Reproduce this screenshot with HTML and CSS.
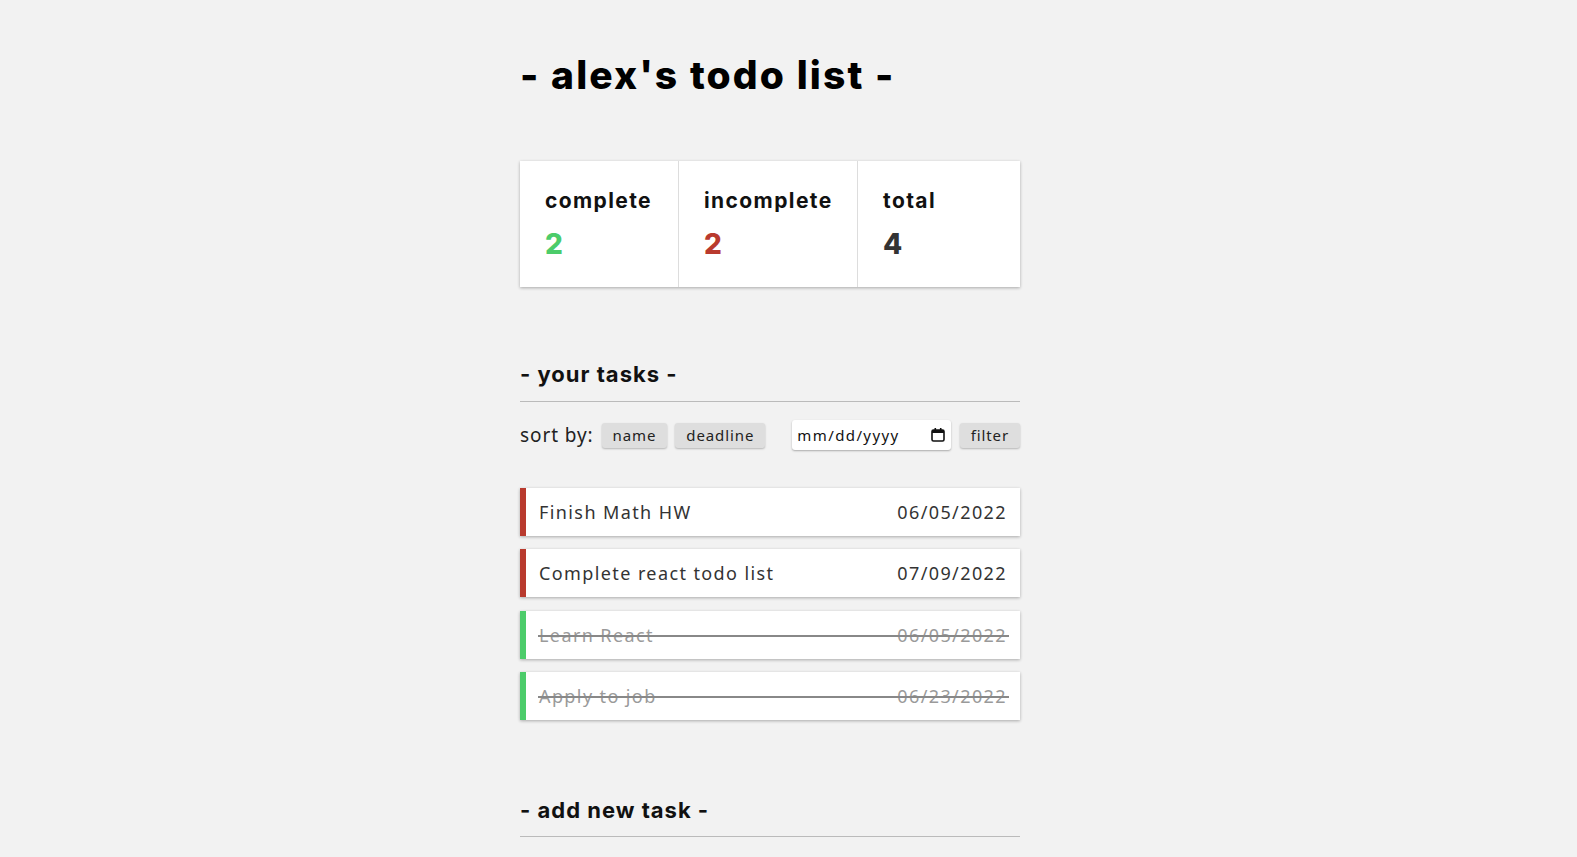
FILE: index.html
```html
<!DOCTYPE html>
<html>
<head>
<meta charset="utf-8">
<link rel="stylesheet" href="styles.css">
</head>
<body>
<div class="page">
  <h1 class="title">- alex's todo list -</h1>
  <div class="stats">
    <div class="stat s1"><div class="label">complete</div><div class="num green">2</div></div>
    <div class="stat s2"><div class="label">incomplete</div><div class="num red">2</div></div>
    <div class="stat s3"><div class="label">total</div><div class="num dark">4</div></div>
  </div>
  <h2 class="section">- your tasks -</h2>
  <hr class="rule">
  <div class="controls">
    <span class="sortlabel">sort by:</span>
    <button class="btn">name</button>
    <button class="btn">deadline</button>
    <div class="date"><span>mm/dd/yyyy</span>
      <svg width="16" height="16" viewBox="0 0 16 16"><rect x="2" y="3" width="12" height="11" rx="1.5" fill="none" stroke="#111" stroke-width="1.6"/><rect x="2" y="3" width="12" height="3" fill="#111"/><rect x="4.5" y="1" width="1.6" height="3" fill="#111"/><rect x="9.9" y="1" width="1.6" height="3" fill="#111"/></svg>
    </div>
    <button class="btn filter">filter</button>
  </div>
  <div class="tasks">
    <div class="task todo"><span>Finish Math HW</span><span>06/05/2022</span></div>
    <div class="task todo"><span>Complete react todo list</span><span>07/09/2022</span></div>
    <div class="task done"><span>Learn React</span><span>06/05/2022</span></div>
    <div class="task done"><span>Apply to job</span><span>06/23/2022</span></div>
  </div>
  <h2 class="section add">- add new task -</h2>
  <hr class="rule add-rule">
</div>
</body>
</html>
```
FILE: styles.css
```css
html, body { margin: 0; padding: 0; }
body {
  background: #f2f2f2;
  font-family: "Noto Sans", "Open Sans", sans-serif;
  color: #222;
  overflow: hidden;
}
.page {
  width: 500px;
  margin-left: 520px;
  padding-top: 50px;
}
.title {
  font-family: Inter, "Liberation Sans", sans-serif;
  font-weight: 800;
  font-size: 39px;
  letter-spacing: 2.1px;
  margin: 0;
  line-height: 50px;
  color: #000;
}
.stats {
  margin-top: 61px;
  background: #fff;
  display: flex;
  height: 126px;
  box-shadow: 0 1px 3px rgba(0,0,0,0.3);
}
.stat {
  padding: 25px 0 0 25px;
  box-sizing: border-box;
}
.s1 { width: 159px; border-right: 1px solid #ddd; }
.s2 { width: 179px; border-right: 1px solid #ddd; }
.s3 { flex: 1; }
.label {
  font-family: Inter, "Liberation Sans", sans-serif;
  font-weight: 700;
  font-size: 21px;
  letter-spacing: 1.4px;
  line-height: 30px;
  color: #111;
}
.num {
  font-family: Inter, "Liberation Sans", sans-serif;
  font-weight: 800;
  font-size: 28px;
  line-height: 36px;
  margin-top: 10px;
}
.green { color: #4ccc6a; }
.red { color: #b93a2e; }
.dark { color: #333; }
.section {
  font-family: Inter, "Liberation Sans", sans-serif;
  font-weight: 700;
  font-size: 22px;
  letter-spacing: 1px;
  line-height: 30px;
  margin: 72px 0 0 0;
  color: #111;
}
.rule {
  border: 0;
  border-top: 1px solid #bbb;
  margin: 12px 0 0 0;
}
.add-rule { margin-top: 11px; }
.controls {
  display: flex;
  align-items: center;
  margin-top: 18px;
  height: 30px;
}
.sortlabel {
  font-size: 19px;
  letter-spacing: 0.9px;
  margin-right: 8px;
  color: #222;
}
.btn {
  font-family: "Noto Sans", "Open Sans", sans-serif;
  font-size: 15px;
  background: #dedede;
  border: 0;
  border-radius: 3px;
  box-shadow: 0 1px 2px rgba(0,0,0,0.25);
  padding: 0 11px;
  height: 25px;
  color: #222;
  margin-right: 8px;
  letter-spacing: 0.9px;
}
.date {
  margin-left: 19px;
  width: 159px;
  height: 30px;
  box-sizing: border-box;
  background: #fff;
  border-radius: 3px;
  box-shadow: 0 1px 2px rgba(0,0,0,0.3);
  display: flex;
  align-items: center;
  justify-content: space-between;
  padding: 0 5px 0 5px;
  font-size: 15px;
  color: #111;
  letter-spacing: 1.4px;
  margin-right: 8px;
}
.filter { margin-right: 0; margin-left: auto; height: 25px; padding: 0 11px; }
.tasks {
  margin-top: 38px;
  display: flex;
  flex-direction: column;
  gap: 13.4px;
}
.task {
  position: relative;
  height: 48px;
  background: #fff;
  box-shadow: 0 1px 3px rgba(0,0,0,0.3);
  display: flex;
  align-items: center;
  justify-content: space-between;
  padding: 0 13px 0 13px;
  font-size: 18px;
  letter-spacing: 1.4px;
  color: #333;
}
.task.todo { border-left: 6px solid #b93a2e; }
.task.done { border-left: 6px solid #4ccc6a; color: #9a9a9a; }
.task.done::after {
  content: "";
  position: absolute;
  left: 12px;
  right: 11px;
  top: 24px;
  height: 2px;
  background: #888;
}
.section.add { margin-top: 75px; }
```
